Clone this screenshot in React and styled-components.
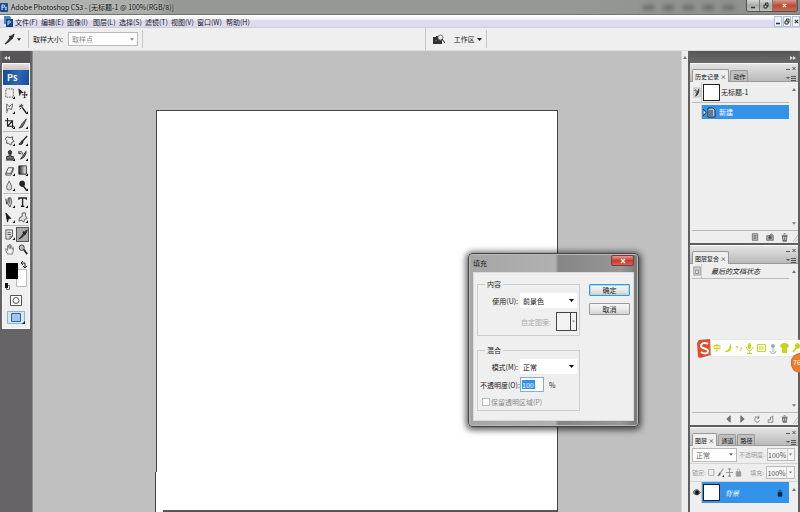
import React from "react";
import styled, { createGlobalStyle, css } from "styled-components";

const Global = createGlobalStyle`
  * { box-sizing: border-box; }
  html, body { margin: 0; height: 100%; overflow: hidden; }
  body, button, input, select { font-family: "Noto Sans CJK SC", "Liberation Sans", sans-serif; font-size: 7px; color: #222; }
  button, input, select, fieldset, legend { margin: 0; padding: 0; }
  #root { height: 100%; }
  svg { display: block; flex: none; }
`;

const Window = styled.div`
  height: 100vh; display: flex; flex-direction: column; background: #c0c0c0;
  line-height: 10px; white-space: nowrap; overflow: hidden;
`;
const TitleBar = styled.header`
  height: 15px; flex: none; display: flex; align-items: center; padding-right: 2px;
  background: linear-gradient(90deg, #b4b7b5 0, #a9aca9 150px, #969894 170px, #969894 70%, #8d8f8c 100%);
  border-bottom: 1px solid #747674;
`;
const AppTitle = styled.h1`
  margin: 0 auto 0 3px; font-size: 7px; font-weight: 400; color: #0c0c0c; text-shadow: 0 0 3px #ddd;
`;
const Smudges = styled.div`
  display: flex; gap: 9px; margin-right: 12px; filter: blur(2px);
  i { width: 11px; height: 5px; background: #696b69; }
`;
const WindowButtons = styled.div`
  display: flex; align-self: flex-start; height: 12px; border: 1px solid #555; border-top: 0; border-radius: 0 0 3px 3px; overflow: hidden;
`;
const WindowButton = styled.button`
  width: ${(p) => (p.$close ? 24 : 13)}px; border: 0; border-right: 1px solid #777;
  display: flex; align-items: center; justify-content: center; color: ${(p) => (p.$close ? "#fff" : "#333")};
  background: ${(p) => (p.$close ? "linear-gradient(#d59a8c, #bd4a35 50%, #cc6b4c)" : "linear-gradient(#d6d8d6, #aaacaa 50%, #bfc1bf)")};
`;
const MenuBar = styled.nav`
  height: 13px; flex: none; display: flex; align-items: center; padding-left: 4px;
  background: linear-gradient(#fff, #f4f3fb 30%, #dcdaee 45%, #dedcee 85%, #ccc9d8);
`;
const MenuItem = styled.button`
  width: ${(p) => (p.$wide ? 29 : 26)}px; border: 0; background: none; text-align: left; line-height: 10px; color: #1b1b2b;
`;
const MenuGap = styled.div`width: 2px;`;
const ChildButtons = styled.div`display: flex; gap: 1px; margin-left: auto;`;
const ChildButton = styled.button`
  width: 8px; height: 11px; border: 1px solid #b3bfdb; background: #f2f5fd; color: #333; display: grid; place-items: center;
`;
const OptionsBar = styled.div`
  height: 23px; flex: none; display: flex; align-items: center; background: #efefef; border-bottom: 1px solid #ddd;
`;
const OptionsGroup = styled.div`
  height: 18px; display: flex; align-items: center; gap: ${(p) => p.$gap || 4}px; padding: 0 4px;
  border-right: 1px solid #c5c5c5; width: ${(p) => p.$w || "auto"};
`;
const Divider = styled.div`width: 1px; height: 22px; background: #c5c5c5; margin-right: 3px;`;
const Spacer = styled.div`flex: ${(p) => p.$grow || 1};`;
const PlainButton = styled.button`border: 0; background: none; display: flex; align-items: center; gap: 2px; line-height: 10px; color: inherit;`;

const SelectBox = styled.div`
  display: grid; align-items: center; width: ${(p) => p.$w || "100%"}; height: ${(p) => p.$h || 14}px;
  background: #fff; border: ${(p) => (p.$plain ? "0" : "1px solid #b9b9b9")}; color: ${(p) => p.$c || "#111"};
  select { grid-area: 1 / 1; appearance: none; width: 100%; height: 100%; border: 0; background: none; padding: 0 7px 0 3px; color: inherit; outline: 0; }
  svg { grid-area: 1 / 1; justify-self: end; margin-right: 3px; pointer-events: none; }
`;
const Arrow = ({ s = 5 }) => (
  <svg width={s} height="3" viewBox="0 0 5 3"><path d="M0 0h5L2.5 3z" fill="currentColor" /></svg>
);
function Dropdown({ label, value, id, ...rest }) {
  return (
    <SelectBox {...rest}>
      <select id={id} aria-label={label} defaultValue={value}><option>{value}</option></select>
      <Arrow s={rest.$plain ? 5 : 4} />
    </SelectBox>
  );
}

const Body = styled.main`position: relative; flex: 1; min-height: 0; display: flex;`;
const ToolDock = styled.aside`width: 33px; flex: none; background: #656365; padding: 0 2px; border-right: 1px solid #8b8b8b;`;
const DockHeader = styled.div`
  height: 12px; display: flex; align-items: center; justify-content: ${(p) => (p.$end ? "space-between" : "flex-start")};
  padding: 1px 2px 0; color: #ddd; background: ${(p) => (p.$end ? "linear-gradient(#555, #6a6a6a)" : "#575557")};
`;
const Toolbox = styled.div`background: #efefef; border: 1px solid #fafafa; padding-bottom: 4px;`;
const Grip = styled.div`height: 6px; background: linear-gradient(#e5e1e0, #c8c3c2);`;
const Brand = styled.div`
  height: 15px; background: linear-gradient(100deg, #174a9a, #2d67b7 60%, #1a4c97); color: #fff; font: 700 9px/15px "Noto Sans CJK SC", sans-serif; padding-left: 4px;
`;
const ToolGroup = styled.div`
  display: grid; grid-template-columns: 13px 13px; justify-content: center; padding-top: 1px; border-bottom: 1px solid #bbb;
  &:last-of-type { border-bottom: 0; }
`;
const Tool = styled.button`
  height: 15px; border: 1px solid transparent; background: none; display: grid; place-items: center; color: #222;
  ${(p) => p.$on && css`background: #aaa; border-color: #555;`}
`;
const ToolStack = styled.section`display: flex; flex-direction: column; align-items: center; gap: 5px; padding-top: 1px;`;

const Workspace = styled.section`
  flex: 1; min-width: 0; display: grid; grid-template-columns: 4fr 13fr 4fr; padding-top: 59px; background: #c0c0c0;
`;
const Page = styled.div`grid-column: 2; display: flex; flex-direction: column;`;
const PageUpper = styled.div`flex: 9; background: #fff; border: 1px solid #444; border-bottom: 0;`;
const PageLower = styled.div`
  flex: 1; margin-left: -1px; background: #fff; border: solid #444; border-width: 0 1px; display: flex; align-items: flex-end; padding-left: 7px;
  i { flex: 1; height: 2px; background: #555; }
`;
const ScrollTrack = styled.div`width: 7px; flex: none; background: #ededed; border-left: 1px solid #d2d2d2; color: #777; padding: 5px 0 0 1px;`;

const PanelDock = styled.aside`width: 112px; flex: none; background: #5f5f5f; display: flex; flex-direction: column; padding: 0 2px;`;
const Panel = styled.section`
  height: ${(p) => (p.$h ? p.$h + "px" : "auto")}; ${(p) => !p.$h && "flex: 1;"} min-height: 0; margin-bottom: ${(p) => (p.$h ? 2 : 0)}px;
  background: #eee; display: flex; flex-direction: column; border-top: 1px solid #fafafa;
`;
const PanelHead = styled.div`
  height: 18px; flex: none; display: flex; align-items: flex-end; gap: 1px; padding-left: 2px;
  background: linear-gradient(#e4e4e4, #b9b9b9); border-bottom: 1px solid #999;
`;
const Tab = styled.button`
  height: ${(p) => (p.$on ? 13 : 11)}px; padding: 0 2px; border: 1px solid #999; border-bottom: 0; border-radius: 2px 2px 0 0;
  background: ${(p) => (p.$on ? "#eee" : "#bfbfbf")}; margin-bottom: ${(p) => (p.$on ? -1 : 0)}px; font-size: 6px; line-height: 9px; color: #111;
`;
const PanelControls = styled.div`margin-left: auto; align-self: stretch; color: #555; padding: 2px 1px 0;`;
const PanelMain = styled.div`flex: 1; min-height: 0; display: flex;`;
const PanelList = styled.div`flex: 1; min-width: 0; padding-left: 2px;`;
const PanelScroll = styled.div`width: 9px; flex: none; display: flex; flex-direction: column; justify-content: space-between; align-items: center; padding: 6px 0 5px; color: #777;`;
const ListRow = styled.div`
  height: ${(p) => p.$h}px; display: flex; align-items: center; gap: 1px; border-bottom: 1px solid ${(p) => (p.$on ? "transparent" : "#bbb")};
  margin-top: ${(p) => p.$mt || 0}px; font-style: ${(p) => (p.$i ? "italic" : "normal")};
  ${(p) => p.$on && css`background: #3392e9; color: #fff; border: 0;`}
`;
const RowCell = styled.span`
  width: 10px; align-self: stretch; display: grid; place-items: center; background: #eee; border-right: 1px solid #ccc; color: #222;
`;
const LockMark = styled.span`width: 18px; display: grid; place-items: center; color: #10243d;`;
const Thumb = styled.span`width: 17px; height: 17px; background: #fff; border: 1px solid #222; flex: none;`;
const RowText = styled.span`padding-left: ${(p) => p.$pl || 0}px;`;
const PanelFoot = styled.div`
  height: 13px; flex: none; margin-left: 2px; border-top: 1px solid #b9b9b9; display: flex; align-items: center; justify-content: flex-end; gap: 7px; color: #555;
`;
const ResizeCorner = styled.span`margin-left: -3px;`;
const LayerOptions = styled.div`
  display: flex; flex: none; height: 18px; align-items: center; gap: 2px; padding: 0 3px 0 2px; color: #999; font-size: 6px; border-bottom: 1px solid #d4d4d4;
  label { font-size: 6px; }
`;
const Percent = styled.div`
  display: flex; align-items: center; width: 29px; height: 13px; border: 1px solid #bbb; background: #f4f4f4; color: #777; margin-left: ${(p) => (p.$push ? 0 : "auto")};
  input { width: 20px; height: 100%; border: 0; border-right: 1px solid #ccc; background: none; color: #555; text-align: center; }
  svg { margin: 0 auto; }
`;
const PushRight = styled.label`margin-left: auto;`;

const Dialog = styled.form`
  position: absolute; top: 202px; right: 161px; width: 171px; padding: 0 4px 5px; border: 1px solid #444; border-radius: 4px;
  background: linear-gradient(90deg, #a5a5a5, #b1b1b1 51%, #858585 53%, #979797 90%, #777);
  box-shadow: 0 1px 6px 2px rgba(0,0,0,.65), inset 0 0 0 1px #bbb;
`;
const DialogTitle = styled.header`height: 18px; display: flex; align-items: center; justify-content: space-between;`;
const DialogHeading = styled.h2`margin: 0; font-size: 7px; font-weight: 400;`;
const DialogClose = styled.button`
  align-self: flex-start; margin-top: 1px; width: 23px; height: 11px; border: 1px solid #743d38; border-radius: 2px; color: #fff;
  background: linear-gradient(#e59a8e, #c93c33 50%, #d95e50); display: grid; place-items: center;
`;
const DialogBody = styled.div`height: 149px; background: #efefef; border: 1px solid #d9d9d9; display: flex; gap: 9px; padding: 6px 3px;`;
const Groups = styled.div`width: 103px; display: flex; flex-direction: column; gap: 9px;`;
const Group = styled.fieldset`
  border: 1px solid #ccc; height: ${(p) => p.$h}px; min-width: 0; padding: 4px 2px 0;
  legend { margin-left: 5px; padding: 0 2px; line-height: 10px; font-size: 7px; }
`;
const Field = styled.div`
  display: grid; grid-template-columns: 38px 1fr; column-gap: 2px; align-items: center; margin-bottom: ${(p) => p.$mb || 3}px;
  color: ${(p) => (p.$off ? "#aaa" : "#222")};
  label { text-align: right; }
`;
const FieldTail = styled.div`display: flex; align-items: center; gap: 5px; justify-content: ${(p) => p.$j || "flex-start"};`;
const NumberInput = styled.input`
  width: 24px; height: 15px; border: 1px solid #82b0d4; background: linear-gradient(#3392e9, #3392e9) 1px 2px / 13px 9px no-repeat #fff; color: #fff; padding: 0 1px; outline: 0;
`;
const PatternButton = styled.button`
  width: 21px; height: 19px; border: 1px solid #444; background: #f3f3f3; display: grid; grid-template-columns: 1fr 5px; color: #888;
  span { border-right: 1px solid #444; height: 100%; }
  svg { align-self: center; justify-self: center; }
`;
const Check = styled.label`
  display: flex; align-items: center; gap: 1px; color: #888; padding-left: 2px;
  input { appearance: none; width: 8px; height: 8px; border: 1px solid #bbb; background: #fff; }
`;
const Actions = styled.div`flex: 1; display: flex; flex-direction: column; gap: 7px; padding-top: 5px;`;
const Action = styled.button`
  width: 41px; height: 12px; line-height: 9px; border: 1px solid ${(p) => (p.$main ? "#3b9cc4" : "#999")}; border-radius: 1px;
  background: linear-gradient(#f6f6f6, #e9e9e9 50%, #d3d3d3); ${(p) => p.$main && "box-shadow: inset 0 0 0 1px #9bdcf2;"}
`;

const ImeBar = styled.div`
  position: absolute; right: 0; top: 287px; width: 103px; height: 20px; display: flex; align-items: center; color: #c5d61c;
`;
const ImeTray = styled.div`flex: 1; height: 16px; background: #fff; display: flex; align-items: center; justify-content: space-between; font-size: 8px; font-weight: 700; padding-left: 2px; box-shadow: 0 0 2px #ddd;`;
const Bubble = styled.div`
  position: absolute; right: 0; top: 302px; width: 9px; height: 20px; border-radius: 10px 0 0 10px; background: #f47b24; border: 1px solid #bd6a30; border-right: 0;
  color: #fff; font-size: 7px; line-height: 17px; padding-left: 1px; overflow: hidden;
`;

const Svg = ({ children, w = 10, h = 11, box = "0 0 12 12" }) => (
  <svg width={w} height={h} viewBox={box} preserveAspectRatio="none" fill="none" stroke="currentColor" strokeWidth="1">{children}</svg>
);
const Cross = ({ s = 5 }) => <Svg w={s} h={s} box="0 0 6 6"><path d="M1 1l4 4M5 1L1 5" strokeWidth="1.3" /></Svg>;
const Minus = () => <Svg w={6} h={6} box="0 0 6 6"><path d="M1 4.5h4" strokeWidth="1.6" /></Svg>;
const Restore = () => <Svg w={6} h={7} box="0 0 6 7"><path d="M1 3h3v3H1zM2.5 3V1H5v3.5H4" /></Svg>;
const Chevrons = ({ right }) => (
  <svg width="6" height="4" viewBox="0 0 6 4" fill="currentColor">{right ? <path d="M0 0l3 2-3 2zM3 0l3 2-3 2z" /> : <path d="M3 0L0 2l3 2zM6 0L3 2l3 2z" />}</svg>
);
const PsMark = () => (
  <svg width="8" height="9" viewBox="0 0 8 9"><rect width="8" height="9" rx="1" fill="#1d4d91" /><path d="M2 7V2h1.7c1.5 0 1.5 2.3 0 2.3H2M7 4.5c-2-.5-2 .8-1 1s.7 1.500-1 1" stroke="#d8ebff" fill="none" /></svg>
);
const DocMark = () => (
  <svg width="9" height="11" viewBox="0 0 9 11"><path d="M0 0h6l1 2v6H0z" fill="#4f87c5" /><path d="M2 3h7v8H2z" fill="#164582" /><path d="M4 9V5h1.500c1.400 0 1.400 2 0 2H4" fill="none" stroke="#bcdcff" /></svg>
);
const corner = <path d="M12 9v3H9z" fill="#111" stroke="none" />;

const icons = {
  marquee: <><path d="M1 1h9v9H1z" strokeDasharray="2 1" stroke="#555" />{corner}</>,
  move: <><path d="M1 1l5 4-3 .3L2 8z" fill="#222" /><path d="M8 4v7M5 7.5h6M7 5l1-1 1 1M7 10l1 1 1-1M10 6.5l1 1-1 1" /></>,
  lasso: <><path d="M2 1l3 3 4-3-1 6-4-1-2 2zM3 7l-1 4" stroke="#555" />{corner}</>,
  wand: <><path d="M5 5l5 6" strokeWidth="1.6" /><path d="M4 1v3M1 4h3M2 2l2 2M6 2L5 4M2 7l2-2" />{corner}</>,
  crop: <><path d="M3 0v9h8M0 3h9v8M3 9l6-6" strokeWidth="1.3" />{corner}</>,
  slice: <><path d="M10 1L5 6 3 9l-2 2 4-1 2-3z" fill="#777" stroke="#333" />{corner}</>,
  heal: <><path d="M3 2l3 1 3-1v3l2 2-3 1-1 3-3-2H2V6L0 4z" stroke="#444" />{corner}</>,
  brush: <><path d="M11 1L5 7" strokeWidth="1.5" /><path d="M5 6C3 7 4 9 1 10c3 1 5 0 5-3z" fill="#444" />{corner}</>,
  stamp: <><circle cx="6" cy="2.5" r="2" fill="#444" /><path d="M5 4v3H2v3h8V7H7V4z" fill="#777" /><path d="M1 11h9" />{corner}</>,
  history: <><path d="M10 1L6 6 3 10l4-2 3-5" fill="#777" /><path d="M1 3c3-3 5 0 4 2M1 1v3h3" />{corner}</>,
  snapshot: <><path d="M1 1h10v10H1z" fill="#ddd" stroke="#bbb" /><path d="M9 2L6 6 4 10l3-2 2-4" fill="#555" /><path d="M2 4c2-2 4 0 2 2" /></>,
  eraser: <><path d="M4 3h6L7 9H1zM1 9l0 2h6l3-6V3" fill="#eee" stroke="#444" />{corner}</>,
  blur: <><path d="M5 1c1 3 3 4 3 7a3 3 0 01-6 0c0-3 2-4 3-7z" fill="#ddd" stroke="#555" />{corner}</>,
  dodge: <><circle cx="5" cy="4" r="3" fill="#222" /><path d="M6 6l4 5" strokeWidth="1.7" />{corner}</>,
  pen: <><path d="M4 1h3l1 5-2 5-3-4zM5 1v6" fill="#ccc" stroke="#444" /><path d="M1 2l1 6" />{corner}</>,
  path: <><path d="M1 1l6 6-3 .3L3 11z" fill="#111" />{corner}</>,
  shape: <><path d="M5 1h4l0 3 2 3-3 1-1 3-3-2-3 1 1-4 3-1z" fill="#ddd" stroke="#555" />{corner}</>,
  note: <><path d="M1 1h8v7l-3 3H1zM9 8H6v3M3 4h4M3 6h4" stroke="#555" fill="#ddd" />{corner}</>,
  dropper: <><path d="M11 1L8 3 4 8l-3 3 4-2 5-5z" fill="#444" stroke="#222" /><path d="M6 3l3 3" strokeWidth="2" /></>,
  hand: <path d="M3 11L1 7l0-2 2 2V2l1-1 1 4V1l1-1 1 5V2h1l1 4 1-2v3l-1 4z" fill="#eee" stroke="#777" />,
  zoom: <><circle cx="4.5" cy="4" r="3" fill="#bbb" stroke="#333" /><path d="M7 6l4 5" strokeWidth="2" /></>,
  trash: <><path d="M2 4h7l-1 7H3zM1 3h9M4 1h3" fill="#777" /><path d="M4 5v4M7 5v4" stroke="#eee" /></>,
  camera: <><path d="M1 4h10v7H1zM5 4l3-3 2 2" fill="#aaa" /><circle cx="6" cy="7" r="2" fill="#555" /></>,
  docicon: <path d="M2 1h8v10H2zM4 4h4M4 6h4M4 8h4" fill="#bbb" />,
  comp: <><path d="M1 1h10v10H1z" fill="#ccc" stroke="#999" /><path d="M4 5h4v4H4z" stroke="#777" fill="#eee" /></>,
  prev: <path d="M9 1v10L3 6z" fill="#777" />,
  next: <path d="M3 1v10l6-5z" fill="#777" />,
  cycle: <path d="M10 4a4 4 0 10 1 4M10 1v4H7M3 2l2 1" />,
  fresh: <path d="M10 1v10H2V7h4V3h4" />,
  lock: <><path d="M2 5h8v6H2z" fill="currentColor" /><path d="M4 5V3c0-2 4-2 4 0v2" /></>,
  eye: <><path d="M0 6c3-5 8-5 11 0-3 4-8 4-11 0z" fill="#999" /><circle cx="6" cy="6" r="2.5" fill="#000" /></>,
  cross4: <path d="M6 0v12M0 6h12M4 2l2-2 2 2M4 10l2 2 2-2" strokeWidth="1.5" />,
  square: <path d="M1 2h9v8H1z" />,
};
const Icon = ({ n, w, h }) => <Svg w={w} h={h}>{icons[n]}</Svg>;
const TypeIcon = () => <Svg><path d="M1 3V1h9v2M5.5 1v9M3.5 10h4" strokeWidth="1.6" />{corner}</Svg>;
const GradientIcon = () => (
  <Svg><defs><linearGradient id="ramp"><stop stopColor="#222" /><stop offset="1" stopColor="#fff" /></linearGradient></defs><path d="M1 1h9v9H1z" fill="url(#ramp)" />{corner}</Svg>
);

const toolGroups = [
  ["marquee", "move", "lasso", "wand", "crop", "slice"],
  ["heal", "brush", "stamp", "history", "eraser", "gradient", "blur", "dodge"],
  ["pen", "type", "path", "shape"],
  ["note", "dropper", "hand", "zoom"],
];
const menus = ["文件(F)", "编辑(E)", "图像(I)", "图层(L)", "选择(S)", "滤镜(T)", "视图(V)", "窗口(W)", "帮助(H)"];

function Head({ tabs }) {
  return (
    <PanelHead>
      {tabs.map((t, i) => <Tab key={t} $on={i === 0}>{t}{i === 0 && " ×"}</Tab>)}
      <PanelControls>
        <Svg w={12} h={15} box="0 0 12 15"><path d="M1 3.5h4M7.500 1l3 3M10.500 1l-3 3M6 10.500h5M6 12.500h5M6 14.500h5" /><path d="M1 11h4l-2 2z" fill="#555" stroke="none" /></Svg>
      </PanelControls>
    </PanelHead>
  );
}
const Up = () => <svg width="4" height="3" viewBox="0 0 4 3"><path d="M0 3l2-3 2 3z" fill="currentColor" /></svg>;
const Scroll = () => <PanelScroll><Up /><Arrow s={4} /></PanelScroll>;
const Resize = () => <ResizeCorner><Svg w={5} h={9} box="0 0 6 9"><path d="M0 9l6-7M3 9l3-3" stroke="#bbb" /></Svg></ResizeCorner>;

function FillDialog() {
  return (
    <Dialog onSubmit={(e) => e.preventDefault()}>
      <DialogTitle><DialogHeading>填充</DialogHeading><DialogClose type="button" aria-label="关闭"><Cross s={6} /></DialogClose></DialogTitle>
      <DialogBody>
        <Groups>
          <Group $h={57}>
            <legend>内容</legend>
            <Field $mb={4}><label htmlFor="use">使用(U):</label><Dropdown id="use" value="前景色" $plain $h={15} /></Field>
            <Field $off>
              <span />
              <FieldTail $j="flex-end">自定图案:<PatternButton type="button" aria-label="自定图案"><span /><Arrow s={3} /></PatternButton></FieldTail>
            </Field>
          </Group>
          <Group $h={66}>
            <legend>混合</legend>
            <Field><label htmlFor="mode">模式(M):</label><Dropdown id="mode" value="正常" $plain $h={15} /></Field>
            <Field $mb={5}><label htmlFor="opacity">不透明度(O):</label><FieldTail><NumberInput id="opacity" defaultValue="100" />%</FieldTail></Field>
            <Check><input type="checkbox" disabled />保留透明区域(P)</Check>
          </Group>
        </Groups>
        <Actions><Action $main>确定</Action><Action type="button">取消</Action></Actions>
      </DialogBody>
    </Dialog>
  );
}

export default function App() {
  return (
    <Window>
      <Global />
      <TitleBar>
        <PsMark />
        <AppTitle>Adobe Photoshop CS3 - [无标题-1 @ 100%(RGB/8)]</AppTitle>
        <Smudges><i /><i /><i /><i /><i /></Smudges>
        <WindowButtons>
          <WindowButton aria-label="最小化"><Minus /></WindowButton>
          <WindowButton aria-label="还原"><Restore /></WindowButton>
          <WindowButton $close aria-label="关闭"><Cross /></WindowButton>
        </WindowButtons>
      </TitleBar>
      <MenuBar>
        <DocMark /><MenuGap />
        {menus.map((m) => <MenuItem key={m} $wide={m === "窗口(W)"}>{m}</MenuItem>)}
        <ChildButtons>
          <ChildButton aria-label="最小化文档"><Minus /></ChildButton>
          <ChildButton aria-label="还原文档"><Restore /></ChildButton>
          <ChildButton aria-label="关闭文档"><Cross /></ChildButton>
        </ChildButtons>
      </MenuBar>
      <OptionsBar>
        <OptionsGroup $w="29px"><PlainButton aria-label="吸管工具"><Icon n="dropper" w={11} h={12} /><Arrow s={4} /></PlainButton></OptionsGroup>
        <OptionsGroup $gap={5}><label htmlFor="sample">取样大小:</label><Dropdown id="sample" value="取样点" $w="70px" $c="#888" /></OptionsGroup>
        <Spacer $grow={9} />
        <Divider />
        <OptionsGroup $gap={9}>
          <PlainButton aria-label="转到 Bridge">
            <svg width="12" height="11" viewBox="0 0 12 11"><path d="M0 3h3V2h4v1h2v7H0z" fill="#333" /><circle cx="7.500" cy="3.500" r="2.500" fill="#eee" stroke="#777" /><path d="M9 5l3 4M2 5h2v3H2z" stroke="#222" fill="#999" /></svg>
          </PlainButton>
          <PlainButton>工作区 <Arrow /></PlainButton>
        </OptionsGroup>
        <Spacer $grow={10} />
      </OptionsBar>
      <Body>
        <ToolDock>
          <DockHeader><Chevrons /></DockHeader>
          <Toolbox>
            <Grip /><Brand>Ps</Brand>
            {toolGroups.map((g) => (
              <ToolGroup key={g[0]}>
                {g.map((n) => <Tool key={n} aria-label={n} $on={n === "dropper"}>{n === "type" ? <TypeIcon /> : n === "gradient" ? <GradientIcon /> : <Icon n={n} />}</Tool>)}
              </ToolGroup>
            ))}
            <ToolStack>
              <svg width="24" height="32" viewBox="0 0 24 32">
                <path d="M12.500 11.500h10v17h-10z" fill="#fff" stroke="#bbb" /><path d="M2 5h12v16H2z" fill="#000" />
                <path d="M17 5h4v5M17 5l2-2M17 5l2 2M21 10l-2-2M21 10l2-2" fill="none" stroke="#222" />
                <path d="M2.500 27.500h3v4h-3z" fill="#fff" stroke="#777" /><path d="M1 25h3v5H1z" fill="#111" />
              </svg>
              <svg width="12" height="11" viewBox="0 0 12 11"><path d="M.5.500h11v10H.500z" fill="#fff" stroke="#555" /><circle cx="6" cy="5.500" r="3" fill="#fff" stroke="#555" /></svg>
              <svg width="18" height="13" viewBox="0 0 18 13"><path d="M.5.500h17v12H.500z" fill="#d8e8f3" stroke="#8cb3cc" /><path d="M4.500 2.500h9v8h-9z" fill="#9cc6ee" stroke="#31659b" /><path d="M18 10v3h-3z" fill="#111" /></svg>
            </ToolStack>
          </Toolbox>
        </ToolDock>
        <Workspace><Page><PageUpper /><PageLower><i /></PageLower></Page></Workspace>
        <ScrollTrack><Up /></ScrollTrack>
        <PanelDock>
          <DockHeader $end><span /><Chevrons right /></DockHeader>
          <Panel $h={180}>
            <Head tabs={["历史记录", "动作"]} />
            <PanelMain>
              <PanelList>
                <ListRow $h={21}><RowCell><Icon n="snapshot" w={8} /></RowCell><Thumb /><RowText>无标题-1</RowText></ListRow>
                <ListRow $h={14} $on $mt={2}>
                  <RowCell />
                  <svg width="13" height="11" viewBox="0 0 13 11"><path d="M0 2l3 3.500L0 9z" fill="#fff" stroke="#124" /><path d="M5 1h5l2 2v7H5zM6 4h4M6 6h4M6 8h4" fill="#adc2d5" stroke="#234" /></svg>
                  <RowText $pl={2}>新建</RowText>
                </ListRow>
              </PanelList>
              <Scroll />
            </PanelMain>
            <PanelFoot><Icon n="docicon" w={8} h={8} /><Icon n="camera" w={8} h={8} /><Icon n="trash" w={8} h={9} /><Resize /></PanelFoot>
          </Panel>
          <Panel $h={180}>
            <Head tabs={["图层复合"]} />
            <PanelMain>
              <PanelList><ListRow $h={15} $i><RowCell><Icon n="comp" w={8} h={10} /></RowCell><RowText $pl={8}>最后的文档状态</RowText></ListRow></PanelList>
              <Scroll />
            </PanelMain>
            <PanelFoot><Icon n="prev" w={7} h={8} /><Icon n="next" w={7} h={8} /><Icon n="cycle" w={7} h={8} /><Icon n="fresh" w={7} h={8} /><Icon n="trash" w={8} h={8} /><Resize /></PanelFoot>
          </Panel>
          <Panel>
            <Head tabs={["图层", "通道", "路径"]} />
            <LayerOptions>
              <Dropdown label="混合模式" value="正常" $w="46px" $c="#666" />
              <label htmlFor="layer-opacity">不透明度:</label>
              <Percent><input id="layer-opacity" defaultValue="100%" /><Arrow s={3} /></Percent>
            </LayerOptions>
            <LayerOptions>
              锁定: <Icon n="square" w={7} h={9} /><Icon n="brush" w={7} h={9} /><Icon n="cross4" w={7} h={9} /><Icon n="lock" w={7} h={9} />
              <PushRight htmlFor="layer-fill">填充:</PushRight>
              <Percent $push><input id="layer-fill" defaultValue="100%" /><Arrow s={3} /></Percent>
            </LayerOptions>
            <PanelMain>
              <PanelList>
                <ListRow $h={21} $on $i>
                  <RowCell><Icon n="eye" w={8} h={9} /></RowCell><Thumb /><RowText $pl={4}>背景</RowText><Spacer />
                  <LockMark><Icon n="lock" w={6} h={8} /></LockMark>
                </ListRow>
              </PanelList>
              <PanelScroll><Up /></PanelScroll>
            </PanelMain>
          </Panel>
        </PanelDock>
        <ImeBar>
          <svg width="14" height="19" viewBox="0 0 14 19"><path d="M2 1l11-1 1 16-11 3-2-1L0 4z" fill="#df4d2b" /><path d="M11 5C8 3 4 4 4 7s7 2 7 5-4 3-7 1" fill="none" stroke="#fff" strokeWidth="2" /></svg>
          <ImeTray>
            中
            <svg width="8" height="10" viewBox="0 0 8 10"><path d="M6 0c4 6-1 11-6 8 4 0 6-3 6-8z" fill="currentColor" /></svg>
            <svg width="8" height="10" viewBox="0 0 8 10"><circle cx="2" cy="4" r="1" fill="currentColor" /><path d="M5 5h2L5 8" stroke="currentColor" fill="none" /></svg>
            <svg width="7" height="11" viewBox="0 0 7 11"><rect x="2" width="3" height="6" rx="1.500" fill="currentColor" /><path d="M.5 4c0 5 6 5 6 0M3.500 8v3M1 10.500h5" stroke="currentColor" fill="none" /></svg>
            <svg width="9" height="8" viewBox="0 0 9 8"><path d="M.5.500h8v7h-8zM2 3h5M2 5h5" stroke="currentColor" fill="none" /></svg>
            <svg width="8" height="11" viewBox="0 0 8 11"><circle cx="4" cy="3" r="2" fill="#9aabb5" /><path d="M4 5v4M1 8c0 3 6 3 6 0" stroke="#9aabb5" fill="none" /></svg>
            <svg width="9" height="10" viewBox="0 0 9 10"><path d="M3 0h3l3 2-1 3H7v5H2V5H1L0 2z" fill="currentColor" /></svg>
            <svg width="8" height="10" viewBox="0 0 8 10"><path d="M1 9l4-5M7 1L5 3V1C3 2 4 5 5 5s3-1 2-3" stroke="currentColor" strokeWidth="1.800" fill="none" /></svg>
          </ImeTray>
        </ImeBar>
        <Bubble>76</Bubble>
        <FillDialog />
      </Body>
    </Window>
  );
}
